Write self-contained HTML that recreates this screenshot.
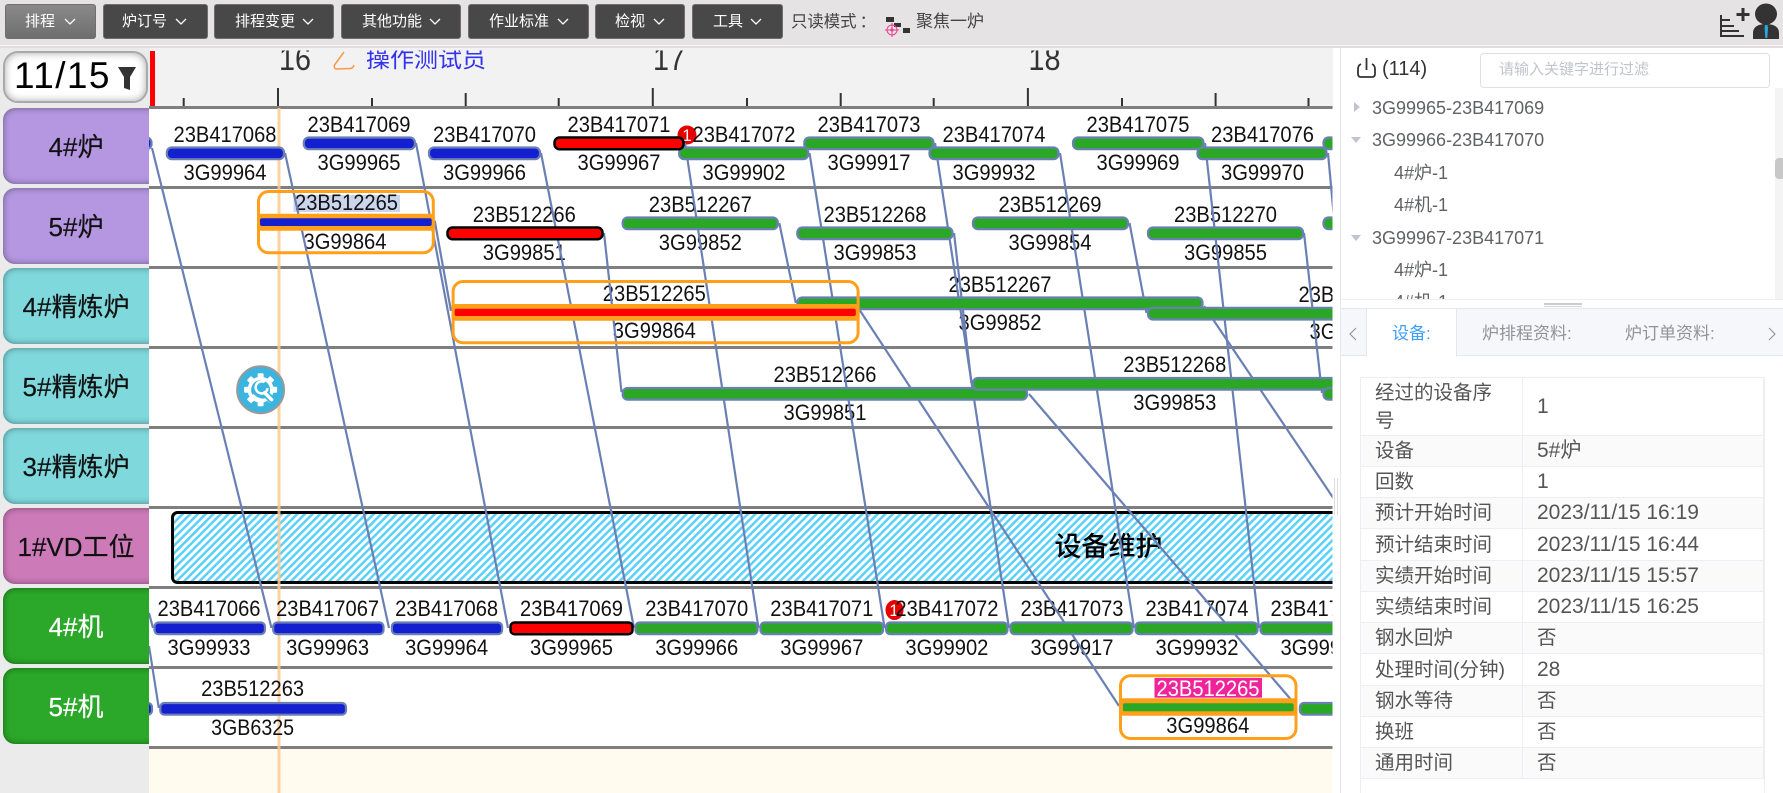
<!DOCTYPE html>
<html><head><meta charset="utf-8"><title>排程</title>
<style>
html,body{margin:0;padding:0;width:1783px;height:793px;overflow:hidden;background:#fff;font-family:"Liberation Sans","Noto Sans CJK SC",sans-serif}
.a{position:absolute}
#top{left:0;top:0;width:1783px;height:45px;background:#e5e3e4;border-bottom:1px solid #f6f4f5}
#strip{left:0;top:46px;width:1783px;height:2px;background:#e4dce0}
.btn{position:absolute;top:4px;height:33px;border:1px solid #6f6f6f;border-radius:3px;background:#484848;color:#fff;font-size:15px;line-height:33px;white-space:nowrap}
.btn span{position:absolute;top:0}
.btn svg{position:absolute;top:13px;width:12px;height:8px}
#left{left:0;top:48px;width:149px;height:745px;background:#ecebec}
.lab{position:absolute;left:3px;width:160px;height:76px;border-radius:12px;box-shadow:inset 0 0 7px rgba(0,0,0,.42);font-size:26px;line-height:79px;color:#111;-webkit-text-stroke:.2px currentColor}
.lab span{position:absolute;left:0;width:146px;text-align:center}
#date{left:3px;top:51px;width:141px;height:48px;border:2px solid #a9a9a9;border-radius:15px;background:#fff;box-shadow:inset 0 0 8px rgba(0,0,0,.35);font-size:37px;line-height:48px;color:#000;letter-spacing:1.4px}
svg text{font-family:"Liberation Sans","Noto Sans CJK SC",sans-serif}
.t{font-size:22px;fill:#111;text-anchor:middle}
.conn line{stroke:#6a80b5;stroke-width:2.2}
.b{stroke:#6a80b5;stroke-width:2.2}
.bl{fill:#1420d0}.gr{fill:#2aa825}.re{fill:#f00;stroke:#000;stroke-width:2.5}
.tree{position:absolute;font-size:18px;color:#606266;line-height:24px;white-space:nowrap}
.car{position:absolute;width:0;height:0}
#tb{position:absolute;left:1360px;top:377px;width:404px;border-collapse:collapse;table-layout:fixed;font-size:19.5px;color:#555}
#tb td{border:1px solid #ebeef5;padding:0 0 0 14px;height:30px;line-height:24px;vertical-align:middle;box-sizing:border-box}
#tb td+td{font-size:21px}
#tb td.z{font-size:19.5px}
#tb tr.s td{background:#fafafa}
</style></head><body>
<div class="a" id="top"></div><div class="a" id="strip"></div>

<div class="btn" style="left:5px;width:89px;background:linear-gradient(#8a8a8a,#6e6e6e)"><span style="left:19px">排程</span><svg viewBox="0 0 12 8" style="left:58px"><path d="M1 1l5 5 5-5" fill="none" stroke="#fff" stroke-width="1.3"/></svg></div>
<div class="btn" style="left:103px;width:103px"><span style="left:18px">炉订号</span><svg viewBox="0 0 12 8" style="left:71px"><path d="M1 1l5 5 5-5" fill="none" stroke="#fff" stroke-width="1.3"/></svg></div>
<div class="btn" style="left:214px;width:118px"><span style="left:20px">排程变更</span><svg viewBox="0 0 12 8" style="left:87px"><path d="M1 1l5 5 5-5" fill="none" stroke="#fff" stroke-width="1.3"/></svg></div>
<div class="btn" style="left:341px;width:118px"><span style="left:20px">其他功能</span><svg viewBox="0 0 12 8" style="left:87px"><path d="M1 1l5 5 5-5" fill="none" stroke="#fff" stroke-width="1.3"/></svg></div>
<div class="btn" style="left:468px;width:119px"><span style="left:20px">作业标准</span><svg viewBox="0 0 12 8" style="left:88px"><path d="M1 1l5 5 5-5" fill="none" stroke="#fff" stroke-width="1.3"/></svg></div>
<div class="btn" style="left:595px;width:88px"><span style="left:19px">检视</span><svg viewBox="0 0 12 8" style="left:57px"><path d="M1 1l5 5 5-5" fill="none" stroke="#fff" stroke-width="1.3"/></svg></div>
<div class="btn" style="left:692px;width:89px"><span style="left:20px">工具</span><svg viewBox="0 0 12 8" style="left:57px"><path d="M1 1l5 5 5-5" fill="none" stroke="#fff" stroke-width="1.3"/></svg></div>
<div class="a" style="left:791px;top:10px;font-size:16.4px;line-height:24px;color:#444;white-space:nowrap">只读模式<span style="position:relative;left:3px">：</span></div>
<svg class="a" style="left:884px;top:15px" width="28" height="24" viewBox="0 0 28 24"><rect x="2" y="2" width="8" height="5" fill="#333"/><rect x="19" y="13" width="7" height="5" fill="#333"/><rect x="10" y="8" width="7" height="4" fill="#333"/><circle cx="8" cy="15" r="5" fill="none" stroke="#ee3d8c" stroke-width="1"/><circle cx="8" cy="15" r="1.6" fill="#ee3d8c"/><path d="M8 8v14M1 15h14" stroke="#ee3d8c" stroke-width="1"/></svg>
<div class="a" style="left:916px;top:10px;font-size:17px;line-height:24px;color:#444;white-space:nowrap">聚焦一炉</div>
<svg class="a" style="left:1716px;top:2px" width="67" height="40" viewBox="1716 2 67 40">
<path d="M1721 15v21h23M1721 20h9M1721 26h13M1721 31h18" fill="none" stroke="#333" stroke-width="2"/>
<path d="M1743 8v13M1736.500 14.500h13" stroke="#333" stroke-width="3"/>
<ellipse cx="1766" cy="14" rx="11" ry="10.500" fill="#333"/>
<path d="M1753 39v-6c0-6 5-9 13-9s13 3 13 9v6z" fill="#333"/>
<path d="M1765 25h2.500l.5 3-.7 10h-2l-.7-10z" fill="#2aa7e0"/>
</svg>

<div class="a" id="left"></div>
<div class="a" style="left:149px;top:48px;width:1184px;height:60px;background:#f2f2f2"></div>
<div class="lab" style="top:108px;background:#b497e0"><span>4#炉</span></div>
<div class="lab" style="top:188px;background:#b497e0"><span>5#炉</span></div>
<div class="lab" style="top:268px;background:#7fd8dc"><span>4#精炼炉</span></div>
<div class="lab" style="top:348px;background:#7fd8dc"><span>5#精炼炉</span></div>
<div class="lab" style="top:428px;background:#7fd8dc"><span>3#精炼炉</span></div>
<div class="lab" style="top:508px;background:#cc7ab8"><span>1#VD工位</span></div>
<div class="lab" style="top:588px;background:#2ba829;color:#fff"><span>4#机</span></div>
<div class="lab" style="top:668px;background:#2ba829;color:#fff"><span>5#机</span></div>
<div class="a" id="date"><span style="position:absolute;left:9px;top:-1px">11/15</span></div>
<svg class="a" style="left:117px;top:66px" width="20" height="25" viewBox="0 0 20 25"><path d="M1 1h18l-6 10v13l-6-2V11z" fill="#333"/></svg>

<svg class="a" style="left:0;top:0" width="1783" height="793" viewBox="0 0 1783 793">
<defs>
<clipPath id="gc"><rect x="149" y="50.500" width="1183.500" height="743"/></clipPath>
<pattern id="h" width="5.400" height="5.400" patternUnits="userSpaceOnUse" patternTransform="rotate(45)"><rect width="5.400" height="5.400" fill="#fff"/><rect width="2.500" height="5.400" fill="#5ad0fa"/></pattern>
</defs>
<rect x="150" y="51" width="5" height="56" fill="#f00"/>
<g clip-path="url(#gc)">
<rect x="149" y="108" width="1184" height="640" fill="#fff"/>
<rect x="149" y="748" width="1184" height="45" fill="#fffbee"/>
<g stroke="#333" stroke-width="2">
<path d="M278 88v19M652.800 88v19M1027.900 88v19" />
<path d="M465.700 93v14M840.700 93v14M1215.600 93v14"/>
<path d="M183.700 98v9M372 98v9M558.700 98v9M747 98v9M933.700 98v9M1122 98v9M1308.500 98v9"/>
</g>
<text x="295" y="70" font-size="33" fill="#333" text-anchor="middle" textLength="32" lengthAdjust="spacingAndGlyphs">16</text>
<text x="669" y="70" font-size="33" fill="#333" text-anchor="middle" textLength="32" lengthAdjust="spacingAndGlyphs">17</text>
<text x="1044.500" y="70" font-size="33" fill="#333" text-anchor="middle" textLength="32" lengthAdjust="spacingAndGlyphs">18</text>
<path d="M344 52L334.500 65Q333.500 69 337 69L350 68.500Q353 68.500 354 65" fill="none" stroke="#f59a4a" stroke-width="1.500"/>
<text x="366" y="67" font-size="23" fill="#3333ee" textLength="120" lengthAdjust="spacingAndGlyphs">操作测试员</text>
<g fill="#7f7f7f">
<rect x="149" y="106" width="1184" height="3"/><rect x="149" y="186" width="1184" height="3"/><rect x="149" y="266" width="1184" height="3"/><rect x="149" y="346" width="1184" height="3"/><rect x="149" y="426" width="1184" height="3"/><rect x="149" y="506" width="1184" height="3"/><rect x="149" y="586" width="1184" height="3"/><rect x="149" y="666" width="1184" height="3"/><rect x="149" y="746" width="1184" height="3"/>
</g>
<rect x="172.500" y="512.500" width="1300" height="70" rx="5" fill="url(#h)" stroke="#000" stroke-width="3"/>
<rect x="277.500" y="108" width="3" height="685" fill="#ffc98f" opacity=".85"/>
<text x="1108.500" y="556" font-size="27" fill="#000" text-anchor="middle" font-weight="500">设备维护</text>

<circle cx="687" cy="135" r="9.500" fill="#e60000"/><text x="687" y="141" font-size="17" fill="#fff" text-anchor="middle">1</text>
<ellipse cx="894.500" cy="610" rx="9" ry="10" fill="#e60000"/><text x="894" y="616" font-size="17" fill="#fff" text-anchor="middle">1</text>
<rect x="293.500" y="195" width="106.500" height="17" fill="#cbd6ee"/>
<rect x="1154.500" y="678" width="107.500" height="19.700" fill="#f0249a"/>

<g class="t">
<text class="t" x="225" y="142" textLength="103" lengthAdjust="spacingAndGlyphs">23B417068</text><text class="t" x="225" y="180" textLength="83" lengthAdjust="spacingAndGlyphs">3G99964</text>
<text class="t" x="359" y="132" textLength="103" lengthAdjust="spacingAndGlyphs">23B417069</text><text class="t" x="359" y="170" textLength="83" lengthAdjust="spacingAndGlyphs">3G99965</text>
<text class="t" x="484.500" y="142" textLength="103" lengthAdjust="spacingAndGlyphs">23B417070</text><text class="t" x="484.500" y="180" textLength="83" lengthAdjust="spacingAndGlyphs">3G99966</text>
<text class="t" x="619" y="132" textLength="103" lengthAdjust="spacingAndGlyphs">23B417071</text><text class="t" x="619" y="170" textLength="83" lengthAdjust="spacingAndGlyphs">3G99967</text>
<text class="t" x="744" y="142" textLength="103" lengthAdjust="spacingAndGlyphs">23B417072</text><text class="t" x="744" y="180" textLength="83" lengthAdjust="spacingAndGlyphs">3G99902</text>
<text class="t" x="869" y="132" textLength="103" lengthAdjust="spacingAndGlyphs">23B417073</text><text class="t" x="869" y="170" textLength="83" lengthAdjust="spacingAndGlyphs">3G99917</text>
<text class="t" x="994" y="142" textLength="103" lengthAdjust="spacingAndGlyphs">23B417074</text><text class="t" x="994" y="180" textLength="83" lengthAdjust="spacingAndGlyphs">3G99932</text>
<text class="t" x="1138" y="132" textLength="103" lengthAdjust="spacingAndGlyphs">23B417075</text><text class="t" x="1138" y="170" textLength="83" lengthAdjust="spacingAndGlyphs">3G99969</text>
<text class="t" x="1262.500" y="142" textLength="103" lengthAdjust="spacingAndGlyphs">23B417076</text><text class="t" x="1262.500" y="180" textLength="83" lengthAdjust="spacingAndGlyphs">3G99970</text>

<text class="t" x="346.500" y="210" textLength="103" lengthAdjust="spacingAndGlyphs">23B512265</text><text class="t" x="345" y="249" textLength="83" lengthAdjust="spacingAndGlyphs">3G99864</text>
<text class="t" x="524.300" y="222" textLength="103" lengthAdjust="spacingAndGlyphs">23B512266</text><text class="t" x="524.300" y="260" textLength="83" lengthAdjust="spacingAndGlyphs">3G99851</text>
<text class="t" x="700.300" y="212" textLength="103" lengthAdjust="spacingAndGlyphs">23B512267</text><text class="t" x="700.300" y="250" textLength="83" lengthAdjust="spacingAndGlyphs">3G99852</text>
<text class="t" x="875" y="222" textLength="103" lengthAdjust="spacingAndGlyphs">23B512268</text><text class="t" x="875" y="260" textLength="83" lengthAdjust="spacingAndGlyphs">3G99853</text>
<text class="t" x="1050" y="212" textLength="103" lengthAdjust="spacingAndGlyphs">23B512269</text><text class="t" x="1050" y="250" textLength="83" lengthAdjust="spacingAndGlyphs">3G99854</text>
<text class="t" x="1225.500" y="222" textLength="103" lengthAdjust="spacingAndGlyphs">23B512270</text><text class="t" x="1225.500" y="260" textLength="83" lengthAdjust="spacingAndGlyphs">3G99855</text>

<text class="t" x="654.300" y="301" textLength="103" lengthAdjust="spacingAndGlyphs">23B512265</text><text class="t" x="654.300" y="338" textLength="83" lengthAdjust="spacingAndGlyphs">3G99864</text>
<text class="t" x="1000" y="292" textLength="103" lengthAdjust="spacingAndGlyphs">23B512267</text><text class="t" x="1000" y="330" textLength="83" lengthAdjust="spacingAndGlyphs">3G99852</text>
<text class="t" x="1350" y="302" textLength="103" lengthAdjust="spacingAndGlyphs">23B512268</text><text class="t" x="1351" y="339" textLength="83" lengthAdjust="spacingAndGlyphs">3G99853</text>

<text class="t" x="825" y="382" textLength="103" lengthAdjust="spacingAndGlyphs">23B512266</text><text class="t" x="825" y="420" textLength="83" lengthAdjust="spacingAndGlyphs">3G99851</text>
<text class="t" x="1174.800" y="372" textLength="103" lengthAdjust="spacingAndGlyphs">23B512268</text><text class="t" x="1174.800" y="410" textLength="83" lengthAdjust="spacingAndGlyphs">3G99853</text>

<text class="t" x="209" y="616" textLength="103" lengthAdjust="spacingAndGlyphs">23B417066</text><text class="t" x="209" y="655" textLength="83" lengthAdjust="spacingAndGlyphs">3G99933</text>
<text class="t" x="327.600" y="616" textLength="103" lengthAdjust="spacingAndGlyphs">23B417067</text><text class="t" x="327.600" y="655" textLength="83" lengthAdjust="spacingAndGlyphs">3G99963</text>
<text class="t" x="446.600" y="616" textLength="103" lengthAdjust="spacingAndGlyphs">23B417068</text><text class="t" x="446.600" y="655" textLength="83" lengthAdjust="spacingAndGlyphs">3G99964</text>
<text class="t" x="571.500" y="616" textLength="103" lengthAdjust="spacingAndGlyphs">23B417069</text><text class="t" x="571.500" y="655" textLength="83" lengthAdjust="spacingAndGlyphs">3G99965</text>
<text class="t" x="696.700" y="616" textLength="103" lengthAdjust="spacingAndGlyphs">23B417070</text><text class="t" x="696.700" y="655" textLength="83" lengthAdjust="spacingAndGlyphs">3G99966</text>
<text class="t" x="821.800" y="616" textLength="103" lengthAdjust="spacingAndGlyphs">23B417071</text><text class="t" x="821.800" y="655" textLength="83" lengthAdjust="spacingAndGlyphs">3G99967</text>
<text class="t" x="946.900" y="616" textLength="103" lengthAdjust="spacingAndGlyphs">23B417072</text><text class="t" x="946.900" y="655" textLength="83" lengthAdjust="spacingAndGlyphs">3G99902</text>
<text class="t" x="1072" y="616" textLength="103" lengthAdjust="spacingAndGlyphs">23B417073</text><text class="t" x="1072" y="655" textLength="83" lengthAdjust="spacingAndGlyphs">3G99917</text>
<text class="t" x="1197" y="616" textLength="103" lengthAdjust="spacingAndGlyphs">23B417074</text><text class="t" x="1197" y="655" textLength="83" lengthAdjust="spacingAndGlyphs">3G99932</text>
<text class="t" x="1322" y="616" textLength="103" lengthAdjust="spacingAndGlyphs">23B417075</text><text class="t" x="1322" y="655" textLength="83" lengthAdjust="spacingAndGlyphs">3G99969</text>

<text class="t" x="252.600" y="696" textLength="103" lengthAdjust="spacingAndGlyphs">23B512263</text><text class="t" x="252.600" y="735" textLength="83" lengthAdjust="spacingAndGlyphs">3GB6325</text>
<text class="t" x="1208" y="696" textLength="103" lengthAdjust="spacingAndGlyphs" style="fill:#fff">23B512265</text><text class="t" x="1207.800" y="733" textLength="83" lengthAdjust="spacingAndGlyphs">3G99864</text>
</g>

<g class="conn">
<line x1="152" y1="148" x2="271.500" y2="628"/>
<line x1="285" y1="153" x2="389" y2="628"/>
<line x1="416" y1="143" x2="508" y2="628"/>
<line x1="541" y1="153" x2="634" y2="628"/>
<line x1="685" y1="143" x2="758.500" y2="628"/>
<line x1="809.500" y1="153" x2="884.600" y2="628"/>
<line x1="935" y1="143" x2="1009" y2="628"/>
<line x1="1060" y1="153" x2="1134" y2="628"/>
<line x1="1205" y1="143" x2="1259" y2="628"/>
<line x1="1328" y1="153" x2="1336" y2="240"/>
<line x1="434.700" y1="220.700" x2="451" y2="311"/>
<line x1="604" y1="233" x2="621.500" y2="392"/>
<line x1="779.300" y1="223" x2="795.800" y2="303"/>
<line x1="954" y1="233" x2="971.400" y2="383"/>
<line x1="1129.500" y1="223" x2="1146.500" y2="313"/>
<line x1="1304" y1="233" x2="1322" y2="393"/>
<line x1="859.600" y1="310" x2="1119" y2="706"/>
<line x1="1029" y1="394" x2="1293" y2="702"/>
<line x1="1204" y1="306" x2="1336" y2="502"/>
<line x1="149" y1="613" x2="153" y2="628"/>
<line x1="149" y1="646" x2="158.800" y2="708"/>
</g>

<g>
<rect class="b bl" x="130" y="137.500" width="21.500" height="11.700" rx="5"/>
<rect class="b bl" x="166.800" y="147.500" width="117.200" height="11.700" rx="5"/>
<rect class="b bl" x="303.800" y="137.500" width="111.100" height="11.700" rx="5"/>
<rect class="b bl" x="429" y="147.500" width="111" height="11.700" rx="5"/>
<rect class="b gr" x="679.200" y="147.500" width="129" height="11.700" rx="5"/>
<rect class="re" x="554.500" y="137.500" width="129" height="11.700" rx="5"/>
<rect class="b gr" x="804.300" y="137.500" width="129.200" height="11.700" rx="5"/>
<rect class="b gr" x="929.500" y="147.500" width="129" height="11.700" rx="5"/>
<rect class="b gr" x="1073" y="137.500" width="130.500" height="11.700" rx="5"/>
<rect class="b gr" x="1197.500" y="147.500" width="129" height="11.700" rx="5"/>
<rect class="b gr" x="1323.500" y="137.500" width="80" height="11.700" rx="5"/>

<rect class="re" x="447.500" y="227.500" width="155" height="11.700" rx="5"/>
<rect class="b gr" x="622.700" y="217.500" width="155.100" height="11.700" rx="5"/>
<rect class="b gr" x="797.300" y="227.500" width="155.200" height="11.700" rx="5"/>
<rect class="b gr" x="972.900" y="217.500" width="155.100" height="11.700" rx="5"/>
<rect class="b gr" x="1148" y="227.500" width="155.100" height="11.700" rx="5"/>
<rect class="b gr" x="1323.500" y="217.500" width="80" height="11.700" rx="5"/>

<rect class="b gr" x="797.300" y="297.500" width="405.200" height="11.700" rx="5"/>
<rect class="b gr" x="1148" y="307.800" width="250" height="11.700" rx="5"/>

<rect class="b gr" x="622.700" y="388" width="404.300" height="11.700" rx="5"/>
<rect class="b gr" x="972.900" y="378" width="420" height="11.700" rx="5"/>
<rect class="b gr" x="1323.500" y="388" width="80" height="11.700" rx="5"/>

<rect class="b bl" x="154.500" y="622.500" width="110.400" height="11.700" rx="4"/>
<rect class="b bl" x="273.200" y="622.500" width="110.300" height="11.700" rx="4"/>
<rect class="b bl" x="391.900" y="622.500" width="110.200" height="11.700" rx="4"/>
<rect class="re" x="510.500" y="622.500" width="122" height="11.700" rx="4"/>
<rect class="b gr" x="635.500" y="622.500" width="122" height="11.700" rx="4"/>
<rect class="b gr" x="760.500" y="622.500" width="122.600" height="11.700" rx="4"/>
<rect class="b gr" x="886.100" y="622.500" width="121.400" height="11.700" rx="4"/>
<rect class="b gr" x="1010.500" y="622.500" width="122" height="11.700" rx="4"/>
<rect class="b gr" x="1135.500" y="622.500" width="122" height="11.700" rx="4"/>
<rect class="b gr" x="1260.500" y="622.500" width="130" height="11.700" rx="4"/>

<rect class="b bl" x="130" y="703" width="22" height="11.700" rx="4"/>
<rect class="b bl" x="160.300" y="703" width="185.700" height="11.700" rx="4"/>
<rect class="b gr" x="1299.900" y="703" width="100" height="11.700" rx="4"/>
</g>

<g fill="none" stroke="#ff9f1a" stroke-width="3">
<rect x="258.500" y="191.500" width="174.800" height="61.300" rx="10"/>
<rect x="453.100" y="281.500" width="405" height="61.300" rx="10"/>
<rect x="1120.500" y="675.800" width="175.500" height="62.700" rx="10"/>
</g>
<rect x="257" y="213.700" width="177.800" height="17" rx="4" fill="#ff9f1a"/><rect x="260" y="218.300" width="171.700" height="7.700" rx="2" fill="#1420d0"/>
<rect x="451.600" y="304" width="408" height="16.700" rx="4" fill="#ff9f1a"/><rect x="454.600" y="308.700" width="401.200" height="7.300" rx="2" fill="#f00"/>
<rect x="1119" y="698.300" width="178.500" height="17.400" rx="4" fill="#ff9f1a"/><rect x="1122.900" y="703.300" width="170.800" height="8" rx="2" fill="#2aa825"/>

<circle cx="260.600" cy="389.700" r="23.500" fill="#3bb5e0" stroke="#999" stroke-width="2"/>
<g transform="translate(260.600 389.700)">
<g fill="#fff"><rect x="-3" y="-16.500" width="6" height="33" rx="1"/><rect x="-3" y="-16.500" width="6" height="33" rx="1" transform="rotate(45)"/><rect x="-3" y="-16.500" width="6" height="33" rx="1" transform="rotate(90)"/><rect x="-3" y="-16.500" width="6" height="33" rx="1" transform="rotate(135)"/><circle r="13"/></g>
<circle r="9.500" fill="#3bb5e0"/>
<path d="M4 3L13 12" stroke="#3bb5e0" stroke-width="7"/>
<path d="M4 -7.500A6 6 0 1 0 7 -1.500" fill="none" stroke="#fff" stroke-width="2.500"/>
<path d="M4 3L11 10" stroke="#fff" stroke-width="3.500" stroke-linecap="round"/>
<path d="M-8 5Q-3 10 3 10" fill="none" stroke="#fff" stroke-width="2"/>
</g>
</g>
</svg>

<!-- right panel -->
<div class="a" style="left:1340px;top:48px;width:1px;height:745px;background:#e4e7ed"></div>
<div class="a" style="left:1334px;top:478px;width:1px;height:37px;background:#ddd"></div>
<div class="a" style="left:1337px;top:478px;width:1px;height:37px;background:#ddd"></div>
<svg class="a" style="left:1356px;top:57px" width="21" height="22" viewBox="0 0 21 22"><path d="M10.500 1v12M5 7Q2 8.500 2 12v5q0 3 3 3h11q3 0 3-3v-5Q19 8.500 16 7" fill="none" stroke="#333" stroke-width="1.800"/></svg>
<div class="a" style="left:1382px;top:57px;font-size:20px;line-height:24px;color:#333">(114)</div>
<div class="a" style="left:1480px;top:53px;width:288px;height:33px;border:1px solid #dcdfe6;border-radius:4px;background:#fff"></div>
<div class="a" style="left:1499px;top:60px;font-size:15px;line-height:20px;color:#c0c4cc;white-space:nowrap">请输入关键字进行过滤</div>

<div class="a" style="left:1775px;top:88px;width:8px;height:211px;background:#f4f4f4"></div>
<div class="a" style="left:1775px;top:158px;width:8px;height:21px;background:#c8c8c8;border-radius:4px 0 0 4px"></div>

<div class="a" style="left:1341px;top:88px;width:434px;height:211px;overflow:hidden">
<div class="car" style="left:13px;top:14px;border-left:6px solid #c0c4cc;border-top:5px solid transparent;border-bottom:5px solid transparent"></div>
<div class="car" style="left:10px;top:49px;border-top:6px solid #c0c4cc;border-left:5px solid transparent;border-right:5px solid transparent"></div>
<div class="car" style="left:10px;top:147px;border-top:6px solid #c0c4cc;border-left:5px solid transparent;border-right:5px solid transparent"></div>
<div class="tree" style="left:31px;top:8px">3G99965-23B417069</div>
<div class="tree" style="left:31px;top:40px">3G99966-23B417070</div>
<div class="tree" style="left:53px;top:73px">4#炉-1</div>
<div class="tree" style="left:53px;top:105px">4#机-1</div>
<div class="tree" style="left:31px;top:138px">3G99967-23B417071</div>
<div class="tree" style="left:53px;top:170px">4#炉-1</div>
<div class="tree" style="left:53px;top:202px">4#机-1</div>
</div>
<div class="a" style="left:1341px;top:299px;width:442px;height:1px;background:#eceef2"></div>
<div class="a" style="left:1544px;top:303px;width:38px;height:2px;background:#ccc"></div>
<div class="a" style="left:1544px;top:306px;width:38px;height:1px;background:#d6d6d6"></div>

<div class="a" style="left:1341px;top:308px;width:442px;height:48px;background:#f5f7fa;border-top:1px solid #e4e7ed;border-bottom:1px solid #e4e7ed;box-sizing:border-box"></div>
<div class="a" style="left:1366px;top:308px;width:91px;height:49px;background:#fff;border:1px solid #e4e7ed;border-bottom:0;box-sizing:border-box"></div>
<div class="a" style="left:1392px;top:322px;font-size:17px;line-height:24px;color:#409eff">设备:</div>
<div class="a" style="left:1482px;top:322px;font-size:17px;line-height:24px;color:#909399;white-space:nowrap">炉排程资料:</div>
<div class="a" style="left:1625px;top:322px;font-size:17px;line-height:24px;color:#909399;white-space:nowrap">炉订单资料:</div>
<svg class="a" style="left:1349px;top:327px" width="8" height="14" viewBox="0 0 8 14"><path d="M7 1L1 7l6 6" fill="none" stroke="#909399" stroke-width="1.100"/></svg>
<svg class="a" style="left:1768px;top:327px" width="8" height="14" viewBox="0 0 8 14"><path d="M1 1l6 6-6 6" fill="none" stroke="#909399" stroke-width="1.100"/></svg>

<div class="a" style="left:1360px;top:377px;width:1px;height:416px;background:#ebeef5"></div>
<div class="a" style="left:1764px;top:377px;width:1px;height:416px;background:#ebeef5"></div>
<table id="tb"><colgroup><col style="width:162px"><col></colgroup>
<tr><td style="height:58px;line-height:28px">经过的设备序<br>号</td><td>1</td></tr>
<tr class="s"><td style="height:31px">设备</td><td>5#炉</td></tr>
<tr><td style="height:31px">回数</td><td>1</td></tr>
<tr class="s"><td style="height:31px">预计开始时间</td><td>2023/11/15 16:19</td></tr>
<tr><td style="height:32px">预计结束时间</td><td>2023/11/15 16:44</td></tr>
<tr class="s"><td style="height:31px">实绩开始时间</td><td>2023/11/15 15:57</td></tr>
<tr><td style="height:31px">实绩结束时间</td><td>2023/11/15 16:25</td></tr>
<tr class="s"><td style="height:31px">钢水回炉</td><td class="z">否</td></tr>
<tr><td style="height:32px;white-space:nowrap">处理时间(分钟)</td><td>28</td></tr>
<tr class="s"><td style="height:31px">钢水等待</td><td class="z">否</td></tr>
<tr><td style="height:31px">换班</td><td class="z">否</td></tr>
<tr class="s"><td style="height:31px">通用时间</td><td class="z">否</td></tr>
</table>
</body></html>
